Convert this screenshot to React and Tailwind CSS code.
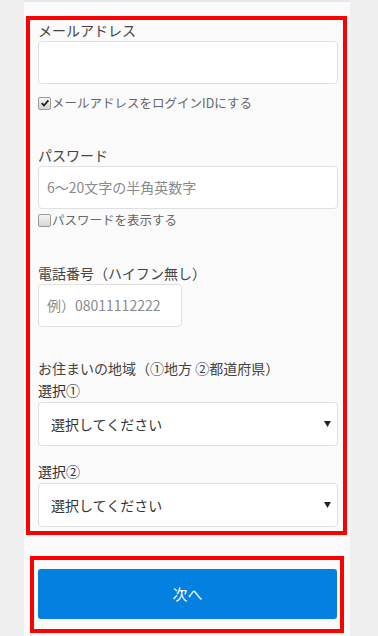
const jp = { fontFamily: '"Noto Sans CJK JP", "Noto Sans", sans-serif' };

function Box({ checked }) {
  return (
    <span className="flex h-[13px] w-[13px] shrink-0 items-center justify-center rounded-[2px] border border-[#9a9a9a] bg-gradient-to-b from-[#f4f4f4] to-[#d6d6d6]">
      {checked && (
        <svg viewBox="0 0 12 12" className="h-[10px] w-[10px]">
          <path d="M2 6.2 L4.8 9 L10 2.8" fill="none" stroke="#222" strokeWidth="2.2" />
        </svg>
      )}
    </span>
  );
}

function Check({ checked, label, className }) {
  return (
    <div className={"flex h-[18px] items-center gap-[1px] text-[12.5px] text-[#666] " + className}>
      <Box checked={checked} />
      <span>{label}</span>
    </div>
  );
}

function Field({ placeholder, className }) {
  return (
    <div
      className={
        "flex h-[43px] items-center rounded-[4px] border border-[#e0e0e0] bg-white pl-[8px] text-[14px] text-[#8a8a8a] " +
        className
      }
    >
      {placeholder}
    </div>
  );
}

function Select({ className }) {
  return (
    <div
      className={
        "flex h-[44px] items-center justify-between rounded-[4px] border border-[#e0e0e0] bg-white pl-[12px] pr-[6px] text-[14px] text-[#333] " +
        className
      }
    >
      <span>選択してください</span>
      <svg viewBox="0 0 8 7" className="h-[6px] w-[7px]">
        <path d="M0 0 H8 L4 7 Z" fill="#222" />
      </svg>
    </div>
  );
}

export default function App() {
  return (
    <div className="min-h-[636px] bg-[#efefef]" style={jp}>
      <div className="ml-[24px] min-h-[636px] w-[326px] border-t-2 border-[#e8e8e8] bg-[#fafafa] pt-[14px]">
        <div className="ml-[2px] w-[321px] border-4 border-[#ff0000] pb-[4px] pl-[8px] pr-[5px]">
          <div className="h-[20px] text-[14px] leading-[20px] text-[#444]">メールアドレス</div>
          <Field className="mt-[1px]" />
          <Check checked label="メールアドレスをログインIDにする" className="mt-[10px]" />

          <div className="mt-[33px] h-[20px] text-[14px] leading-[20px] text-[#444]">パスワード</div>
          <Field placeholder="6～20文字の半角英数字" className="mt-[1px]" />
          <Check label="パスワードを表示する" className="mt-[2px]" />

          <div className="mt-[34px] h-[20px] text-[14px] leading-[20px] text-[#444]">電話番号（ハイフン無し）</div>
          <Field placeholder="例）08011112222" className="mt-[1px] w-[144px]" />

          <div className="mt-[31px] h-[20px] text-[14px] leading-[20px] text-[#444]">
            お住まいの地域（①地方 ②都道府県）
          </div>
          <div className="mt-[2px] h-[20px] text-[14px] leading-[20px] text-[#333]">選択①</div>
          <Select className="mt-[2px]" />
          <div className="mt-[15px] h-[20px] text-[14px] leading-[20px] text-[#333]">選択②</div>
          <Select className="mt-[2px]" />
        </div>

        <div className="ml-[6px] mt-[21px] w-[314px] border-4 border-[#ff0000] pb-[10px] pl-[4px] pr-[3px] pt-[9px]">
          <button className="flex h-[50px] w-full items-center justify-center rounded-[3px] bg-[#0480e0] text-[15px] text-white">
            次へ
          </button>
        </div>
      </div>
    </div>
  );
}
